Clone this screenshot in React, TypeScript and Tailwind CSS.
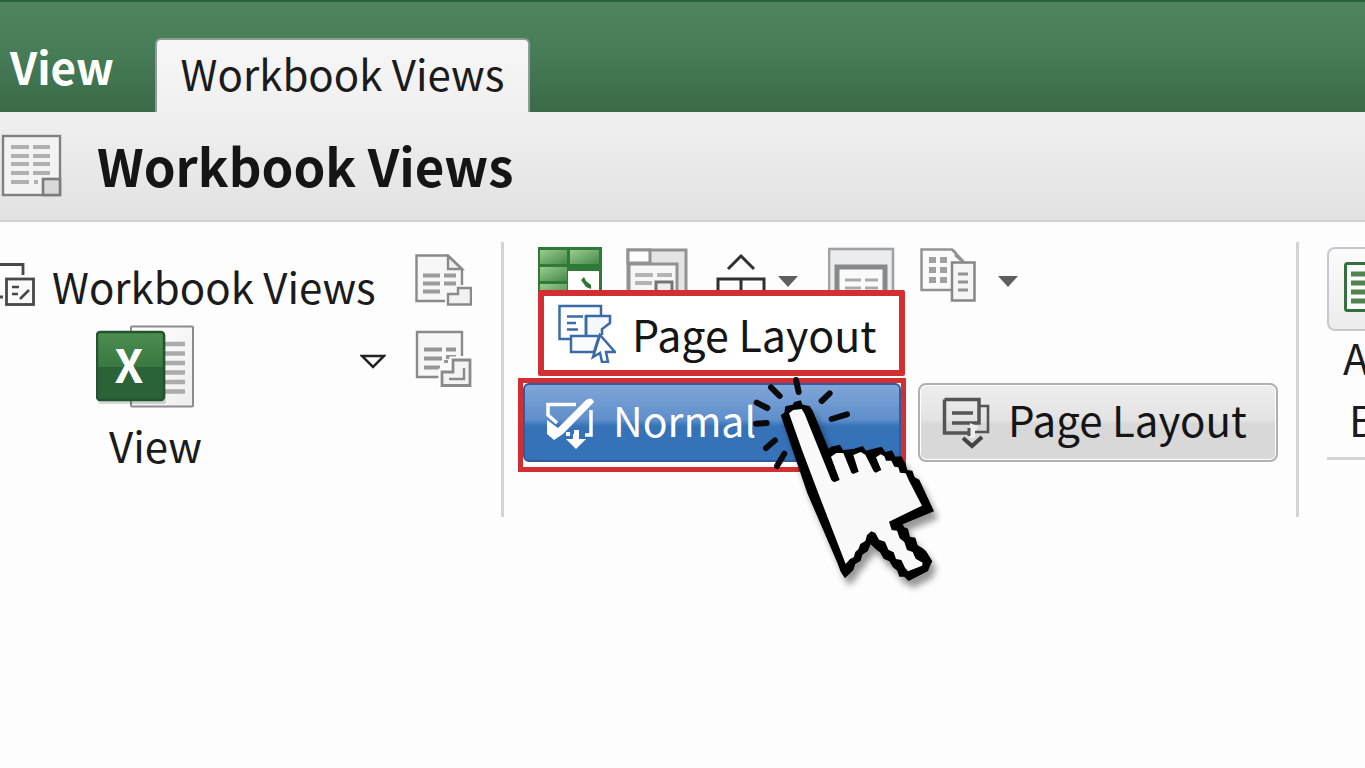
import type { ReactNode } from "react";

function SheetIcon() {
  return (
    <svg width="62" height="64" viewBox="0 0 62 64" fill="none" aria-hidden="true">
      <rect x="3" y="3" width="57" height="59" fill="#f3f3f3" stroke="#808080" strokeWidth="2.400" />
      <g fill="#b0b0b0">
        <rect x="11" y="12" width="18" height="4" /><rect x="33" y="12" width="17" height="4" />
        <rect x="11" y="21" width="18" height="4" /><rect x="33" y="21" width="17" height="4" />
        <rect x="11" y="29" width="18" height="4" /><rect x="33" y="29" width="17" height="4" />
        <rect x="11" y="38" width="18" height="4" /><rect x="33" y="38" width="17" height="4" />
        <rect x="11" y="47" width="18" height="4" /><rect x="34" y="47" width="4" height="4" />
      </g>
      <rect x="43" y="46" width="17" height="16" fill="#d9d9d9" stroke="#7c7c7c" strokeWidth="2.600" />
    </svg>
  );
}

function ViewsIcon() {
  return (
    <svg width="35" height="48" viewBox="0 0 35 48" fill="none" stroke="#484848" strokeWidth="2.8" aria-hidden="true">
      <path d="M0 2.5H23V13M0 35H3" />
      <rect x="6.5" y="17" width="27" height="25.500" fill="#fafafa" />
      <path d="M12 25h7M12 32h6" strokeWidth="2.400" />
      <path d="M20 37L29 28" strokeWidth="2.600" />
    </svg>
  );
}

function DocumentIcon() {
  return (
    <svg width="58" height="54" viewBox="0 0 58 54" fill="none" stroke="#8a8a8a" strokeWidth="2.4" aria-hidden="true">
      <path d="M31 47H2.500V1.500H34L48 15V31" fill="#f7f7f7" />
      <path d="M34 2V15H48Z" fill="#f0f0f0" />
      <path d="M9 21.500h17M30 21.500h12M9 29.500h17M30 29.500h12M9 37.500h17" stroke="#9b9b9b" strokeWidth="4" />
      <path d="M34 50.500V40H44V34H57V50.500Z" fill="#f1f1f1" />
    </svg>
  );
}

function PagesIcon() {
  return (
    <svg width="58" height="58" viewBox="0 0 58 58" fill="none" stroke="#8a8a8a" strokeWidth="2.4" aria-hidden="true">
      <path d="M25 47H3V2H48V26" fill="#f7f7f7" />
      <path d="M10 19.500h18M32 19.500h10M10 28.500h18M32 27h10M10 37.500h16M32 30v3" stroke="#969696" strokeWidth="4" />
      <path d="M28 55.500V42H39V30H56V55.500Z" fill="#f3f3f3" stroke="#fff" strokeWidth="7" />
      <path d="M28 55.500V42H39V30H56V55.500Z" fill="#f3f3f3" strokeWidth="2.800" />
      <path d="M35 49H50V38" />
    </svg>
  );
}

function ExcelIcon() {
  return (
    <svg width="98" height="86" viewBox="0 0 98 86" aria-hidden="true">
      <defs>
        <linearGradient id="xlTop" x2="0" y2="1"><stop stopColor="#4c8e51" /><stop offset="1" stopColor="#397841" /></linearGradient>
        <linearGradient id="paper" x2="1" y2="1"><stop stopColor="#fff" /><stop offset="1" stopColor="#eee" /></linearGradient>
      </defs>
      <rect x="35" y="1.500" width="62" height="80" rx="1" fill="url(#paper)" stroke="#8c8c90" strokeWidth="2" />
      <path d="M68 19h21M68 28.500h21M68 38h21M68 47.500h21M68 57h21M68 66.500h21" stroke="#ababab" strokeWidth="4.500" />
      <rect x="2" y="9" width="68" height="70" rx="3" fill="#000" opacity=".15" />
      <rect x="1" y="7" width="67" height="68" rx="3" fill="#2a6338" />
      <path d="M1 42V10q0-3 3-3H65q3 0 3 3V42Z" fill="url(#xlTop)" />
      <rect x="1" y="7" width="67" height="68" rx="3" fill="none" stroke="#22552f" strokeWidth="2.400" />
      <text x="33" y="58" textAnchor="middle" fill="#fff" fontFamily="Noto Sans CJK SC, sans-serif" fontWeight="700" fontSize="46">X</text>
    </svg>
  );
}

function NormalGridIcon() {
  return (
    <svg width="64" height="56" viewBox="0 0 64 56" aria-hidden="true">
      <defs><linearGradient id="cell" x2="1" y2="1"><stop stopColor="#9acb93" /><stop offset="1" stopColor="#468a49" /></linearGradient></defs>
      <rect width="64" height="56" fill="#2f7a37" />
      <rect x="2" y="3" width="27" height="14" fill="url(#cell)" />
      <rect x="32" y="3" width="29" height="14" fill="url(#cell)" />
      <rect x="2" y="20" width="27" height="14" fill="url(#cell)" />
      <rect x="2" y="37" width="27" height="14" fill="url(#cell)" />
      <rect x="30" y="24" width="31" height="30" fill="#fff" />
      <path d="M43 33l3-3 2 4 5 4v4l-5-2z" fill="#2c7435" />
    </svg>
  );
}

function PageBreakIcon() {
  return (
    <svg width="62" height="56" viewBox="0 0 62 56" fill="none" stroke="#929292" strokeWidth="3" aria-hidden="true">
      <rect x="2" y="3" width="58" height="56" fill="#e4e4e4" />
      <path d="M2 3H24V16H2Z" fill="#fff" />
      <path d="M3 56V17H51V56" fill="#f7f7f7" />
      <path d="M9 28h18M31 28h15M9 36h17" stroke="#b4b4b4" strokeWidth="4" />
      <path d="M30 56V35H46V56" stroke="#747474" fill="#eee" />
    </svg>
  );
}

function SplitIcon() {
  return (
    <svg width="50" height="56" viewBox="0 0 50 56" fill="none" stroke="#303030" strokeWidth="3" aria-hidden="true">
      <path d="M12 22L25 9L38 22M2 56V32H48V56M25 32V56" />
    </svg>
  );
}

function CustomIcon() {
  return (
    <svg width="68" height="56" viewBox="0 0 68 56" fill="none" aria-hidden="true">
      <rect x="1" y="2" width="64" height="60" fill="#ececee" stroke="#a0a1a4" strokeWidth="2.600" />
      <path d="M9 56V20H57V56" fill="#fafafa" stroke="#88898d" strokeWidth="5" />
      <path d="M17 33h16M37 33h13M17 41h16M37 41h13" stroke="#aaa" strokeWidth="3" />
    </svg>
  );
}

function ArrangeIcon() {
  return (
    <svg width="56" height="56" viewBox="0 0 56 56" fill="none" stroke="#929292" strokeWidth="2.500" aria-hidden="true">
      <path d="M1.500 2.500H32L43 14V43H1.500Z" fill="#fafafa" />
      <path d="M32 3q4 1 4 6l6 5" />
      <g fill="#a0a0a0" stroke="none">
        <rect x="9" y="10" width="7" height="6" /><rect x="20" y="10" width="7" height="6" />
        <rect x="9" y="20" width="7" height="6" /><rect x="20" y="20" width="7" height="6" />
        <rect x="9" y="30" width="7" height="6" /><rect x="20" y="30" width="7" height="6" />
      </g>
      <rect x="32" y="15.500" width="22.500" height="38" fill="#f5f5f5" stroke="#868686" />
      <path d="M38 27h10M38 35h10M38 43h10" strokeWidth="3" />
    </svg>
  );
}

function DownArrow() {
  return (
    <svg width="20" height="11" viewBox="0 0 20 11" fill="#5f5f5f" aria-hidden="true"><path d="M0 0H20L10 11Z" /></svg>
  );
}

function PointerPageIcon() {
  return (
    <svg width="58" height="60" viewBox="0 0 58 60" fill="none" stroke="#3a6aa8" strokeWidth="2.500" aria-hidden="true">
      <path d="M43 13V3H1.500V36H27" />
      <path d="M9 13.500h16M9 20h9M9 26.500h11" />
      <path d="M28 33V13H52V20L44 26V32" fill="#f4f8fd" />
      <path d="M28 13V33M13 33H41L36 49H13Z" fill="#f8fbff" />
      <path d="M42 32L35 54L42 50L44 59H50L48 49H57Z" fill="#fff" />
    </svg>
  );
}

function CheckPageIcon() {
  return (
    <svg width="50" height="54" viewBox="0 0 50 54" fill="none" stroke="#fff" strokeWidth="3.500" aria-hidden="true">
      <path d="M31 8.500H3V19L12 27M46 14V39H40" />
      <path d="M2 24V38L9 44L18 38L49 6Q47 0 41 4L13 32Z" fill="#fff" stroke="none" />
      <path d="M21 38h4M29 36h5" strokeWidth="4" />
      <path d="M21 43h7v-5h6v5h7l-10 10z" fill="#fff" stroke="none" />
    </svg>
  );
}

function PagesDownIcon() {
  return (
    <svg width="50" height="52" viewBox="0 0 50 52" fill="none" stroke="#555" strokeWidth="3" aria-hidden="true">
      <path d="M38 9H46V35H32" strokeWidth="2.600" />
      <path d="M2.500 2.500H37V26H10M2.500 2.500V36H28" strokeWidth="3.500" />
      <path d="M10 16h21" strokeWidth="3.500" />
      <path d="M28 26l9 4-4 4v7h-5z" fill="#eee" stroke="none" />
      <path d="M27 31v8" strokeWidth="3" />
      <path d="M21 41l9 8 10-9" strokeWidth="4" stroke="#444" />
    </svg>
  );
}

function HandPointer() {
  return (
    <svg
      width="210" height="235" viewBox="0 0 630 705" aria-hidden="true"
      className="pointer-events-none absolute top-[118px] left-[236px] z-20"
    >
      <defs>
        <filter id="handShadow" x="-10%" y="-10%" width="130%" height="130%">
          <feDropShadow dx="12" dy="22" stdDeviation="9" floodColor="#000" floodOpacity=".4" />
        </filter>
      </defs>
      <g stroke="#0a0a0a" strokeWidth="18" strokeLinecap="round">
        <path d="M168 60l8 36M93 82l26 26M50 128l32 16M48 191l32-2M78 264l27-23M111 318l22-37M245 123l24-23M275 177l46-14" />
      </g>
      <path
        filter="url(#handShadow)" fill="#050505"
        d="M122 165L133 158L136 139L158 134L163 126L182 121L188 134L209 138L218 152L266 267L273 260L300 254L309 270L340 267L368 258L378 272L400 266L425 260L436 276L456 271L466 290L484 289L497 312L502 330L517 332L524 352L538 359L582 454L488 493L493 502L504 506L510 530L526 533L533 556L548 565L558 573L577 604L570 617L564 633L506 663L493 650L478 650L472 632L459 622L448 604L431 596L420 577L410 570L392 553L383 574L367 584L362 602L346 612L340 630L315 655L302 635L292 608L202 400Z"
      />
      <path
        fill="#f9f9f9"
        d="M147 160L160 150L185 147L193 160L274 360L282 367L299 360L273 290L289 279L310 279L334 338L339 342L356 335L340 285L362 276L376 284L401 334L407 338L424 330L408 292L422 283L433 289L438 302L454 302L463 320L475 322L480 338L497 340L507 362L546 437L447 485L455 510L471 512L479 535L493 546L501 570L518 576L527 596L548 608L546 617L504 634L495 623L484 600L468 597L461 577L445 569L435 545L417 539L406 519L394 514L381 525L376 543L361 552L355 568L346 576L341 592L330 597L317 612L235 400L186 270Z"
      />
    </svg>
  );
}

function ToolButton({ label, className, children }: { label: string; className?: string; children: ReactNode }) {
  return (
    <button type="button" aria-label={label} className={`shrink-0 ${className ?? ""}`}>
      {children}
    </button>
  );
}

export default function App() {
  return (
    <div className="flex min-h-screen flex-col overflow-hidden bg-[#fdfdfd] font-['Noto_Sans_CJK_SC','Noto_Sans',sans-serif] text-[42px] leading-[56px] whitespace-nowrap text-[#1b1b1b]">
      <nav className="flex h-28 items-end border-t-2 border-[#27643a] bg-linear-to-b from-[#50855f] via-[#457b55] to-[#3b6a49]">
        <a href="#view" className="w-[155px] pb-[18px] pl-[10px] text-[44px] font-bold text-white">View</a>
        <a href="#workbook-views" className="flex h-[74px] w-[375px] items-start justify-center rounded-t-md border-2 border-b-0 border-[#8f9c93] bg-linear-to-b from-[#f6f6f6] to-[#f0f0f0] pt-[5px]">
          Workbook Views
        </a>
      </nav>

      <header className="flex h-[110px] items-center border-b-2 border-[#cfcfcf] bg-linear-to-b from-[#f0f0f0] to-[#e2e2e2] pb-[2px]">
        <SheetIcon />
        <h1 className="pl-[35px] text-[51px] font-bold text-[#151515]">Workbook Views</h1>
      </header>

      <main className="flex pt-5">
        <section className="flex h-[275px] w-[504px] shrink-0 border-r-3 border-[#d3d3d3] pt-3">
          <div className="w-[414px]">
            <div className="flex h-16 items-center">
              <ViewsIcon />
              <h2 className="pl-[17px]">Workbook Views</h2>
            </div>
            <div className="flex items-start justify-between pt-[7px] pr-7 pl-24">
              <button type="button" className="flex flex-col items-start gap-[6px]">
                <ExcelIcon />
                <span className="pl-[13px]">View</span>
              </button>
              <ToolButton label="More views" className="pt-7">
                <svg width="26" height="18" viewBox="0 0 26 18" fill="none" stroke="#222" strokeWidth="2.500" aria-hidden="true">
                  <path d="M2 3H24L13 14Z" />
                </svg>
              </ToolButton>
            </div>
          </div>
          <div className="flex flex-col gap-[22px]">
            <ToolButton label="Document view"><DocumentIcon /></ToolButton>
            <ToolButton label="Pages view"><PagesIcon /></ToolButton>
          </div>
        </section>

        <section className="relative h-[275px] shrink-0 border-r-3 border-[#d3d3d3] pt-[5px] pr-[18px] pl-[14px]">
          <div className="flex h-[131px] items-start pl-5">
            <ToolButton label="Normal grid"><NormalGridIcon /></ToolButton>
            <ToolButton label="Page break preview" className="ml-6"><PageBreakIcon /></ToolButton>
            <ToolButton label="Split" className="ml-7"><SplitIcon /></ToolButton>
            <ToolButton label="Split options" className="ml-3 pt-[29px]"><DownArrow /></ToolButton>
            <ToolButton label="Custom views" className="ml-[30px]"><CustomIcon /></ToolButton>
            <ToolButton label="Arrange" className="ml-6"><ArrangeIcon /></ToolButton>
            <ToolButton label="Arrange options" className="ml-[22px] pt-[29px]"><DownArrow /></ToolButton>
          </div>

          <div className="flex items-start gap-3">
            <div className="h-[94px] w-[388px] border-5 border-[#d32f32] bg-white">
              <button type="button" className="flex h-[79px] w-full items-center rounded-md border-2 border-[#2e5c9e] bg-linear-to-b from-[#80a5d8] from-0% via-[#5f8fcb] via-46% to-[#3672b8] to-55% pl-5 text-white">
                <CheckPageIcon />
                <span className="pb-2 pl-[18px] text-[41px]">Normal</span>
              </button>
            </div>
            <button type="button" className="mt-[5px] flex h-[79px] w-[360px] items-center rounded-lg border-2 border-[#b0b0b0] bg-linear-to-b from-[#eeeeee] from-0% via-[#e3e3e3] via-47% to-[#d8d8d8] to-52% pl-[22px] text-[#151515] inset-ring-1 inset-ring-white">
              <PagesDownIcon />
              <span className="pb-2 pl-4">Page Layout</span>
            </button>
          </div>

          <button type="button" className="absolute top-12 left-[34px] z-10 flex h-[86px] w-[367px] items-center rounded-xs border-6 border-[#d32f32] bg-white pl-[14px] text-[43px] text-[#151515]">
            <PointerPageIcon />
            <span className="pl-4">Page Layout</span>
          </button>
          <HandPointer />
        </section>

        <section className="min-w-0 flex-1 overflow-hidden pt-[5px] pl-7">
          <button type="button" className="flex h-[84px] w-24 items-center rounded-lg border-2 border-[#c8c8cc] bg-linear-to-b from-[#fbfbfb] to-[#ececec] pb-1 pl-[15px]" aria-label="Macros">
            <svg width="60" height="50" viewBox="0 0 60 50" fill="none" stroke="#356f40" aria-hidden="true">
              <rect x="1.500" y="1.500" width="57" height="47" rx="2" fill="#fafcfa" strokeWidth="3" />
              <path d="M7 12h46M7 21h46M7 30h46M7 39h46" stroke="#50844f" strokeWidth="5" />
            </svg>
          </button>
          <div className="w-40 border-b-3 border-[#d3d3d3] pb-3 leading-[52px]">
            <p className="pl-4">A</p>
            <p className="pt-[10px] pl-[22px]">B</p>
          </div>
        </section>
      </main>
    </div>
  );
}
